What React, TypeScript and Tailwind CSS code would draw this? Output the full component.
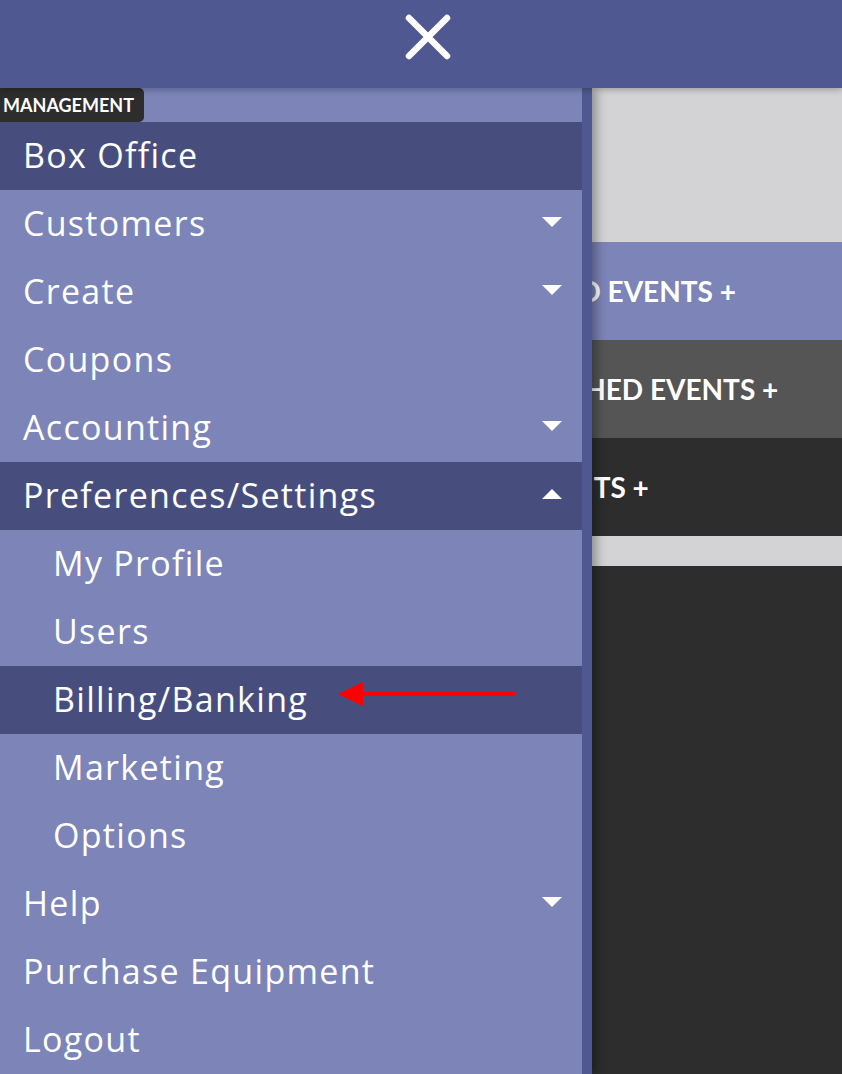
import React from 'react';

type MenuItem = {
  label: string;
  sub?: boolean;
  active?: boolean;
  caret?: 'down' | 'up';
};

const items: MenuItem[] = [
  { label: 'Box Office', active: true },
  { label: 'Customers', caret: 'down' },
  { label: 'Create', caret: 'down' },
  { label: 'Coupons' },
  { label: 'Accounting', caret: 'down' },
  { label: 'Preferences/Settings', active: true, caret: 'up' },
  { label: 'My Profile', sub: true },
  { label: 'Users', sub: true },
  { label: 'Billing/Banking', sub: true, active: true },
  { label: 'Marketing', sub: true },
  { label: 'Options', sub: true },
  { label: 'Help', caret: 'down' },
  { label: 'Purchase Equipment' },
  { label: 'Logout' },
];

const Caret = ({ dir }: { dir: 'down' | 'up' }) => (
  <svg width="20" height="10" viewBox="0 0 20 10" className="absolute right-[20px] -mt-[5px]">
    {dir === 'down' ? <polygon points="0,0 20,0 10,10" fill="white" /> : <polygon points="0,10 20,10 10,0" fill="white" />}
  </svg>
);

const Section = ({ label, bg }: { label: string; bg: string }) => (
  <div className={`h-[98px] flex items-center ${bg}`}>
    <span className="pl-[447px] text-[28px] font-bold text-white font-['Lato',sans-serif]">{label}</span>
  </div>
);

export default function App() {
  return (
    <div className="w-[842px] h-[1074px] overflow-hidden relative bg-[#2d2d2d] font-['Lato',sans-serif]">
      {/* top bar */}
      <div className="h-[88px] bg-[#4f5890] flex items-center justify-center relative z-20 shadow-[0_2px_6px_rgba(0,0,0,0.25)]">
        <svg width="46" height="46" viewBox="0 0 46 46" className="ml-[14px] -mt-[14px]">
          <path d="M4 4 L42 42 M42 4 L4 42" stroke="white" strokeWidth="6.5" strokeLinecap="round" />
        </svg>
      </div>

      {/* page content behind menu */}
      <div>
        <div className="h-[154px] bg-[#d3d2d4]" />
        <Section label="PUBLISHED EVENTS +" bg="bg-[#7c84b8]" />
        <Section label="UNPUBLISHED EVENTS +" bg="bg-[#555555]" />
        <Section label="PAST EVENTS +" bg="bg-[#2d2d2d]" />
        <div className="h-[30px] bg-[#d3d2d4]" />
      </div>

      {/* slide-out menu */}
      <div className="absolute left-0 top-[88px] bottom-0 w-[592px] bg-[#7c84b8] border-r-[10px] border-[#4f5890] shadow-[4px_0_10px_rgba(0,0,0,0.35)] z-10">
        <div className="h-[34px] flex items-center">
          <span className="h-[34px] flex items-center bg-[#2d2d2d] text-white font-bold text-[18px] pl-[3px] pr-[10px] rounded-r-[5px]">
            MANAGEMENT
          </span>
        </div>
        {items.map((it) => (
          <div
            key={it.label}
            className={`relative h-[68px] flex items-center text-white text-[34px] tracking-[1.3px] font-normal font-['Open_Sans',sans-serif] ${it.sub ? 'pl-[53px]' : 'pl-[23px]'} ${it.active ? 'bg-[#474e7e]' : ''}`}
          >
            <span className="leading-none -mt-[2px]">{it.label}</span>
            {it.caret && <Caret dir={it.caret} />}
            {it.label === 'Billing/Banking' && (
              <svg width="180" height="26" viewBox="0 0 180 26" className="absolute left-[338px] top-[15px]">
                <polygon points="0,13 25,1 25,25" fill="#ff0000" />
                <rect x="20" y="11" width="157" height="4" fill="#ff0000" />
              </svg>
            )}
          </div>
        ))}
      </div>
    </div>
  );
}
